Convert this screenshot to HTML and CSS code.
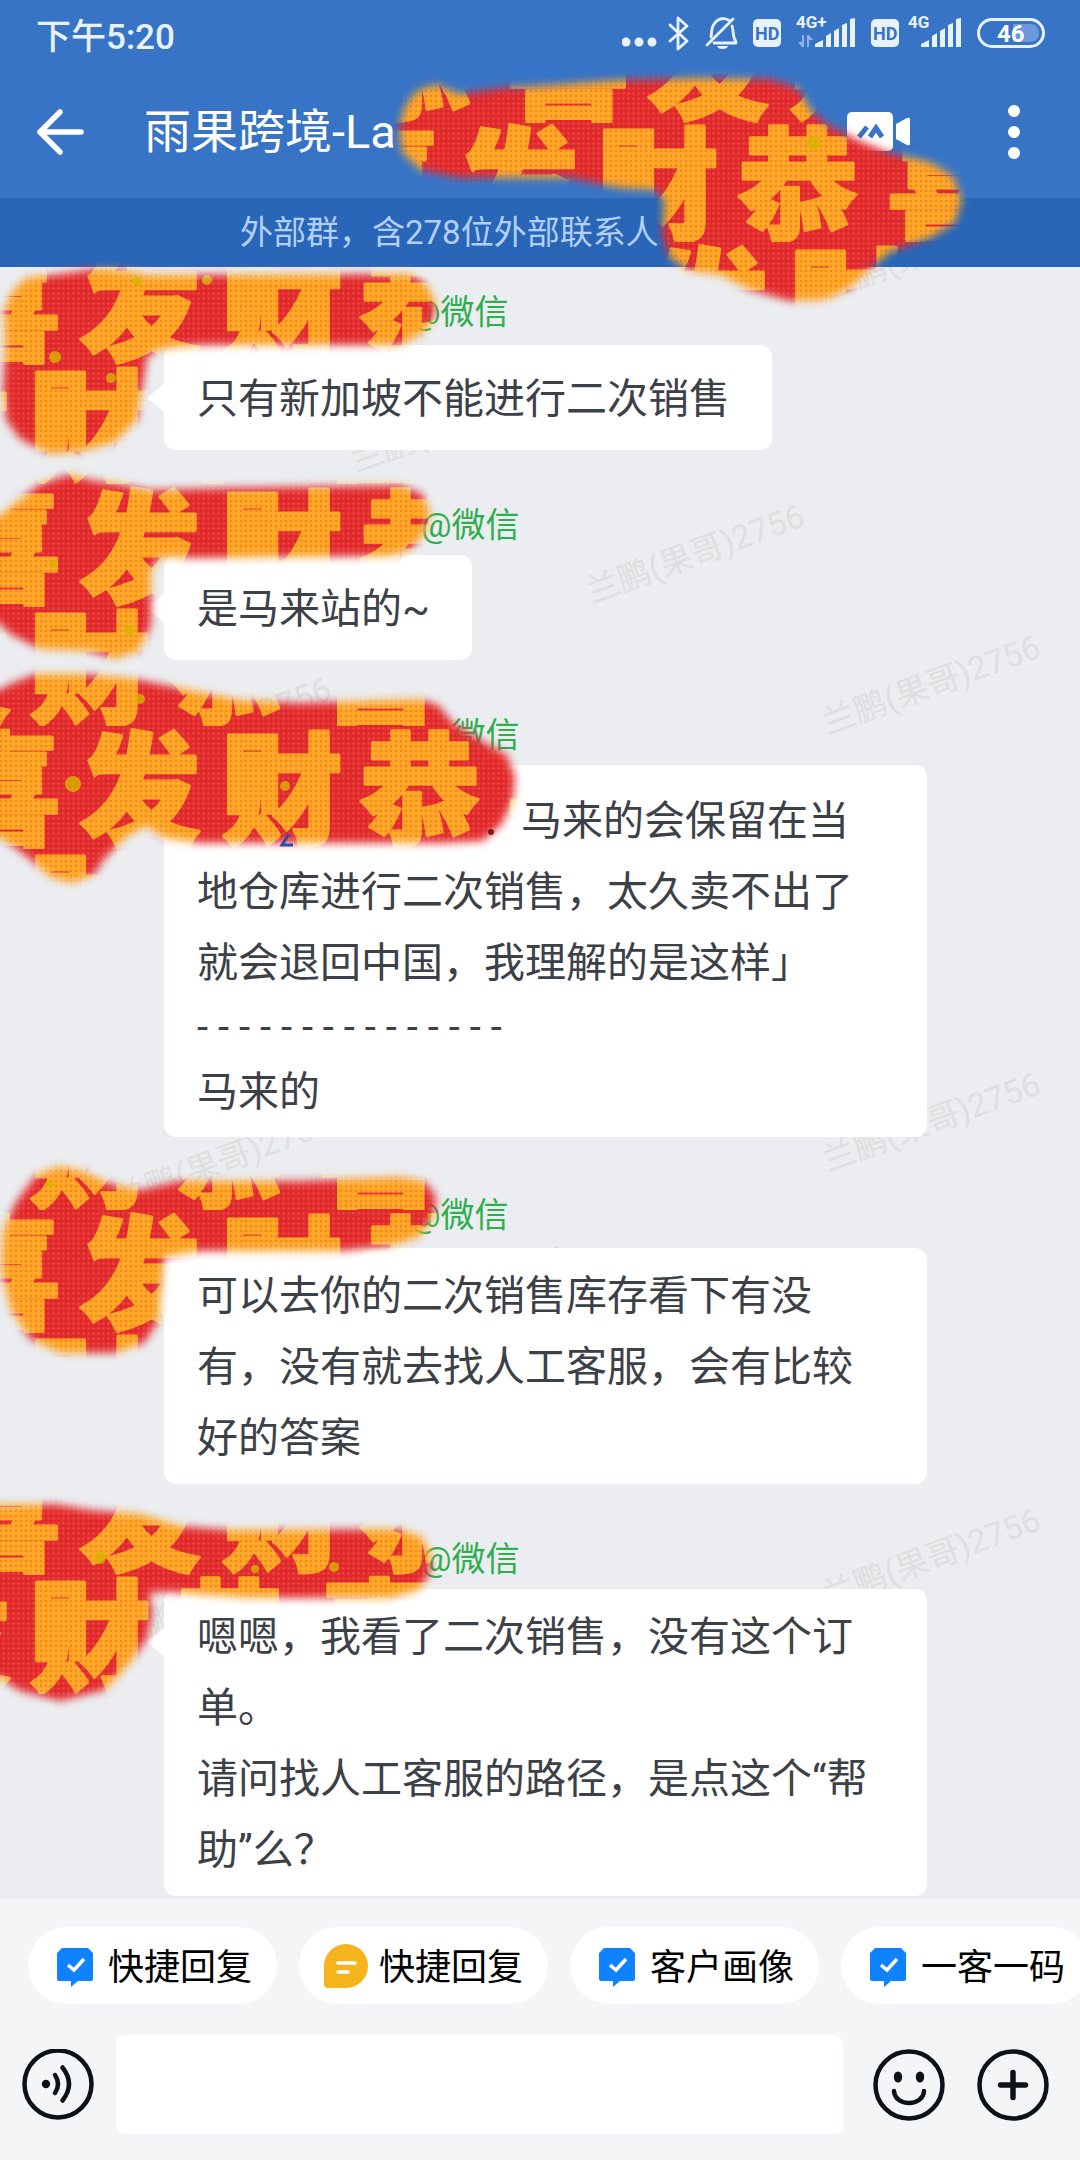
FILE: index.html
```html
<!DOCTYPE html>
<html lang="zh-CN">
<head>
<meta charset="utf-8">
<meta name="viewport" content="width=device-width, initial-scale=1">
<title>雨果跨境</title>
<link rel="stylesheet" href="styles.css">
</head>
<body>
<header class="top">
  <div class="status">
    <time class="clock">下午5:20</time>
    <svg class="status-icons" width="424" height="50" viewBox="622 8 424 50" aria-hidden="true">
      <g fill="#e8f2ff">
        <circle cx="626" cy="42" r="4.5"/><circle cx="639" cy="42" r="4.5"/><circle cx="652" cy="42" r="4.5"/>
        <rect x="753" y="19" width="28" height="28" rx="5"/>
        <rect x="871" y="19" width="28" height="28" rx="5"/>
        <path d="M815 47v-3l8-4v7zM826 47V36l5-3v14zM834 47V31l5-3v19zM842 47V25l5-2v24zM850 47V19l5-1v29z"/>
        <path d="M921 47v-3l8-4v7zM932 47V36l5-3v14zM940 47V31l5-3v19zM948 47V25l5-2v24zM956 47V19l5-1v29z"/>
        <path d="M717 46h11q-1 3-5.500 3t-5.500-3z"/>
      </g>
      <g fill="none" stroke="#e8f2ff" stroke-width="2.800" stroke-linejoin="round" stroke-linecap="round">
        <path d="M670 25l17 16-9 8V18l9 8-17 15"/>
        <path d="M711 37c1-5 0-9 3-13 4-6 11-7 16-3M732 26c2 5 0 10 4 16v1H714M707 45l26-26"/>
      </g>
      <g fill="#8fb2e8"><path d="M802 35h2v12h-2l-4-5h4zM807 47V35h2l4 5h-4v7z"/></g>
      <g fill="#3874c6" class="badge-text"><text x="755" y="40">HD</text><text x="873" y="40">HD</text></g>
      <g fill="#e8f2ff" class="net-text"><text x="796" y="28">4G+</text><text x="908" y="28">4G</text></g>
      <rect x="978.500" y="19.500" width="65" height="27" rx="13.500" fill="none" stroke="#e8f2ff" stroke-width="3"/>
      <path d="M1013 24h16q10 0 10 9t-10 9h-16z" fill="#6b99da"/>
      <text class="battery-text" x="997" y="42" fill="#fff">46</text>
    </svg>
  </div>
  <div class="bar">
    <button class="icon-button back" aria-label="返回">
      <svg width="48" height="48" viewBox="0 0 48 48"><path d="M24 4L4 24l20 20M4 24h41" fill="none" stroke="#fff" stroke-width="5.500" stroke-linecap="round" stroke-linejoin="round"/></svg>
    </button>
    <h1 class="title">雨果跨境-La</h1>
    <button class="icon-button video" aria-label="视频会议">
      <svg width="64" height="40" viewBox="0 0 64 40"><rect width="46" height="39" rx="5" fill="#fff"/><path d="M49 12L60 6q3-1 3 1v25q0 2-3 1L49 27z" fill="#fff"/><path d="M12 25l8-10M23 25l6-9 6 9" fill="none" stroke="#3874c6" stroke-width="5"/></svg>
    </button>
    <button class="icon-button more" aria-label="更多">
      <svg width="12" height="56" viewBox="0 0 12 56"><g fill="#fff"><circle cx="6" cy="7" r="6"/><circle cx="6" cy="28" r="6"/><circle cx="6" cy="49" r="6"/></g></svg>
    </button>
  </div>
  <p class="notice">外部群，含278位外部联系人</p>
</header>

<main class="chat">
  <ol class="messages">
    <li class="message short-name">
      <p class="source">@微信</p>
      <div class="bubble"><p>只有新加坡不能进行二次销售</p></div>
    </li>
    <li class="message">
      <p class="source">@微信</p>
      <div class="bubble"><p>是马来站的~</p></div>
    </li>
    <li class="message">
      <p class="source">@微信</p>
      <div class="bubble quoted">
        <p class="quote">马来的会保留在当地仓库进行二次销售，太久卖不出了就会退回中国，我理解的是这样」</p>
        <p class="rule">- - - - - - - - - - - - - - -</p>
        <p>马来的</p>
      </div>
    </li>
    <li class="message short-name">
      <p class="source">@微信</p>
      <div class="bubble"><p>可以去你的二次销售库存看下有没有，没有就去找人工客服，会有比较好的答案</p></div>
    </li>
    <li class="message">
      <p class="source">@微信</p>
      <div class="bubble"><p>嗯嗯，我看了二次销售，没有这个订单。<br>请问找人工客服的路径，是点这个“帮助”么？</p></div>
    </li>
  </ol>
  <svg class="watermarks" width="1080" height="1632" viewBox="0 267 1080 1632" aria-hidden="true">
    <g text-anchor="middle">
      <text transform="translate(931 249) rotate(-20)" y="12">兰鹏(果哥)2756</text>
      <text transform="translate(459 422) rotate(-20)" y="12">兰鹏(果哥)2756</text>
      <text transform="translate(695 553) rotate(-20)" y="12">兰鹏(果哥)2756</text>
      <text transform="translate(931 684) rotate(-20)" y="12">兰鹏(果哥)2756</text>
      <text transform="translate(222 726) rotate(-20)" y="12">兰鹏(果哥)2756</text>
      <text transform="translate(931 1121) rotate(-20)" y="12">兰鹏(果哥)2756</text>
      <text transform="translate(222 1160) rotate(-20)" y="12">兰鹏(果哥)2756</text>
      <text transform="translate(459 1294) rotate(-20)" y="12">兰鹏(果哥)2756</text>
      <text transform="translate(931 1557) rotate(-20)" y="12">兰鹏(果哥)2756</text>
      <text transform="translate(222 1597) rotate(-20)" y="12">兰鹏(果哥)2756</text>
    </g>
  </svg>
</main>

<footer class="composer">
  <div class="chips">
    <button class="chip"><svg width="44" height="44" viewBox="0 0 44 44"><path d="M9 4h26l5 5v26q0 2-2 2H25l-7 6v-6H6q-2 0-2-2V9z" fill="#0f82ff"/><path d="M15 21l6 5 10-11" fill="none" stroke="#fff" stroke-width="3.500"/></svg><span>快捷回复</span></button>
    <button class="chip"><svg width="44" height="44" viewBox="0 0 44 44"><path d="M22 0a22 22 0 0 1 0 44H4q-4 0-4-4V22A22 22 0 0 1 22 0z" fill="#f5b41c"/><path d="M14 19h17M14 28h10" stroke="#fff" stroke-width="3.500" stroke-linecap="round"/></svg><span>快捷回复</span></button>
    <button class="chip"><svg width="44" height="44" viewBox="0 0 44 44"><path d="M9 4h26l5 5v26q0 2-2 2H25l-7 6v-6H6q-2 0-2-2V9z" fill="#0f82ff"/><path d="M15 21l6 5 10-11" fill="none" stroke="#fff" stroke-width="3.500"/></svg><span>客户画像</span></button>
    <button class="chip"><svg width="44" height="44" viewBox="0 0 44 44"><path d="M9 4h26l5 5v26q0 2-2 2H25l-7 6v-6H6q-2 0-2-2V9z" fill="#0f82ff"/><path d="M15 21l6 5 10-11" fill="none" stroke="#fff" stroke-width="3.500"/></svg><span>一客一码</span></button>
  </div>
  <div class="entry">
    <button class="icon-button" aria-label="语音">
      <svg width="72" height="72" viewBox="0 0 72 72"><g fill="none" stroke="#0d1218" stroke-width="4.500" stroke-linecap="round"><circle cx="36" cy="35" r="33.500"/><path d="M33 26q6 9 0 18M40.500 18.500q13 16.500 0 33"/></g><circle cx="24" cy="35" r="4.200" fill="#0d1218"/></svg>
    </button>
    <input class="field" type="text" aria-label="消息">
    <button class="icon-button smile" aria-label="表情">
      <svg width="72" height="72" viewBox="0 0 72 72"><g fill="none" stroke="#0d1218" stroke-width="4.500" stroke-linecap="round"><circle cx="36" cy="36" r="33.500"/><path d="M21 42c1 16 29 16 30 0"/></g><g fill="#0d1218"><ellipse cx="25" cy="28" rx="4.200" ry="5.500"/><ellipse cx="47" cy="28" rx="4.200" ry="5.500"/></g></svg>
    </button>
    <button class="icon-button" aria-label="添加">
      <svg width="72" height="72" viewBox="0 0 72 72"><g fill="none" stroke="#0d1218" stroke-linecap="round"><circle cx="36" cy="36" r="33.500" stroke-width="4.500"/><path d="M36 23.500v25M23.500 36h25" stroke-width="5.500"/></g></svg>
    </button>
  </div>
</footer>

<svg class="stickers" width="1080" height="1750" viewBox="0 0 1080 1750" aria-hidden="true">
  <defs>
    <pattern id="fortune" width="568" height="242" patternUnits="userSpaceOnUse">
      <rect width="568" height="242" fill="#e32a2f"/>
      <g class="fortune-text" text-anchor="middle" fill="#ffa424" stroke="#ffa424" stroke-width="3" stroke-linejoin="round">
        <text x="0" y="109">喜</text><text x="140" y="109">发</text><text x="282" y="109">财</text><text x="420" y="109">恭</text><text x="568" y="109">喜</text>
        <text x="-50" y="230">发</text><text x="90" y="230">财</text><text x="230" y="230">恭</text><text x="380" y="230">喜</text><text x="518" y="230">发</text>
      </g>
    </pattern>
    <pattern id="weave" width="5" height="5" patternUnits="userSpaceOnUse">
      <rect width="2" height="2" fill="#c40f12" opacity=".2"/>
      <rect x="2.500" y="2.500" width="2" height="2" fill="#ffe06a" opacity=".2"/>
    </pattern>
    <filter id="soft" x="-5%" y="-5%" width="110%" height="110%"><feGaussianBlur stdDeviation="4"/></filter>
    <mask id="strokes" maskUnits="userSpaceOnUse" x="-20" y="0" width="1120" height="1750">
      <g fill="#fff" filter="url(#soft)">
        <path d="M399 128L404 108 415 92 435 84 460 94 500 88 540 86 620 80 700 78 770 79 798 88 812 112 830 126 860 141 890 153 930 162 953 176 962 200 955 223 930 238 890 252 870 269 850 288 825 300 790 301 750 290 720 275 690 271 670 258 662 235 664 200 655 190 620 188 570 178 520 178 460 178 420 170 402 152z"/>
        <path d="M25 278L60 274 95 269 120 270 150 275 410 274 427 285 436 303 432 321 420 335 400 345 200 345 160 349 147 357 142 390 137 420 115 442 80 452 50 454 20 439 6 420 3 390 5 350 4 310 11 293z"/>
        <path d="M70 474L90 480 120 484 150 490 220 488 400 485 422 494 430 511 424 534 410 550 390 556 200 558 160 557 151 570 151 625 139 651 115 659 90 651 40 649 10 634-15 610-15 527 10 507 40 484z"/>
        <path d="M35 674L80 674 130 678 180 688 240 700 300 703 420 699 438 705 454 724 480 740 506 754 515 776 513 800 502 824 483 841 440 843 200 843 165 838 145 826 124 839 104 859 94 875 72 883 50 877 30 859 10 844-15 830-15 697 10 684z"/>
        <path d="M60 1166L85 1172 110 1184 140 1190 180 1181 300 1181 400 1177 424 1181 436 1196 434 1215 419 1237 390 1246 340 1251 200 1251 164 1257 159 1320 144 1343 115 1353 60 1353 30 1339 11 1310 1 1270 3 1230 16 1202 36 1175z"/>
        <path d="M-15 1505L55 1504 90 1510 140 1514 180 1526 230 1530 400 1529 422 1537 431 1555 429 1575 419 1590 390 1598 250 1598 170 1592 150 1592 152 1615 147 1639 129 1664 105 1690 60 1701 20 1691-15 1669z"/>
      </g>
    </mask>
  </defs>
  <g mask="url(#strokes)">
    <rect width="1080" height="1750" fill="url(#fortune)"/>
    <rect width="1080" height="1750" fill="url(#weave)"/>
    <g fill="#d8b400" opacity=".8"><circle cx="814" cy="143" r="7"/><circle cx="137" cy="281" r="5"/><circle cx="207" cy="280" r="5"/><circle cx="55" cy="357" r="6"/><circle cx="111" cy="378" r="5"/><circle cx="54" cy="564" r="4"/><circle cx="129" cy="630" r="5"/><circle cx="73" cy="784" r="8"/><circle cx="285" cy="786" r="5"/><circle cx="140" cy="699" r="5"/><circle cx="50" cy="1184" r="4"/><circle cx="100" cy="1558" r="6"/><circle cx="334" cy="1567" r="5"/><circle cx="255" cy="1569" r="4"/></g>
  </g>
  <path d="M289 834l-7 11h11" fill="none" stroke="#2f4ba8" stroke-width="3"/>
  <circle cx="491" cy="832" r="3" fill="#7c1a1c"/>
</svg>
</body>
</html>
```

FILE: styles.css
```css
* {
  box-sizing: border-box;
}

body {
  position: relative;
  display: flex;
  flex-direction: column;
  min-height: 100vh;
  margin: 0;
  overflow-x: hidden;
  background: #ebedf0;
  color: #3c4047;
  font-family: Roboto, "Noto Sans CJK SC", sans-serif;
}

h1,
p,
ol {
  margin: 0;
  padding: 0;
  font-weight: 400;
}

svg {
  display: block;
  flex: none;
}

button {
  border: 0;
  padding: 0;
  background: none;
  color: inherit;
  font: inherit;
}

/* Header */

.top {
  background: #3874c6;
  color: #fff;
}

.status {
  display: flex;
  align-items: center;
  justify-content: space-between;
  height: 66px;
  padding: 0 34px 0 36px;
}

.clock {
  color: #e8f2ff;
  font-size: 35px;
  font-weight: 500;
}

.badge-text {
  font-size: 18px;
  font-weight: 700;
}

.net-text {
  font-size: 17px;
  font-weight: 700;
}

.battery-text {
  font-size: 24px;
  font-weight: 700;
}

.bar {
  display: flex;
  align-items: center;
  height: 132px;
  padding: 0 60px 0 36px;
}

.title {
  flex: 1;
  margin-left: 60px;
  font-size: 47px;
  line-height: 64px;
}

.more {
  margin-left: 97px;
}

.notice {
  padding: 1px 240px 0;
  background: #2966b8;
  color: #b3d0fa;
  font-size: 33px;
  line-height: 68px;
  white-space: nowrap;
}

/* Conversation */

.chat {
  position: relative;
  flex: 1;
  overflow: hidden;
  padding: 22px 0 3px;
}

.watermarks {
  position: absolute;
  top: 0;
  left: 0;
  font-size: 33px;
  fill: #dddfe1;
}

.messages {
  position: relative;
  z-index: 1;
  display: flex;
  flex-direction: column;
  gap: 55px;
  list-style: none;
}

.message {
  display: flex;
  flex-direction: column;
  align-items: flex-start;
  gap: 10px;
  padding: 0 153px 0 164px;
}

.source {
  margin-left: 257px;
  color: #2fae50;
  font-size: 34px;
  line-height: 40px;
}

.short-name {
  gap: 13px;
  padding-top: 3px;
}

.short-name .source {
  margin-left: 246px;
}

.bubble {
  position: relative;
  display: flex;
  flex-direction: column;
  justify-content: center;
  min-height: 105px;
  padding: 13px 42px 10px 33px;
  border-radius: 12px;
  background: #fff;
  font-size: 41px;
  line-height: 71px;
}

.bubble::before {
  content: "";
  position: absolute;
  top: 38px;
  left: -17px;
  width: 18px;
  height: 30px;
  background: #fff;
  clip-path: polygon(0 50%, 100% 0, 100% 100%);
}

.quoted {
  padding-top: 21px;
  padding-bottom: 9px;
}

.quote {
  text-indent: 324px;
}

.rule {
  font-size: 40px;
  line-height: 58px;
}

/* Composer */

.composer {
  display: flex;
  flex-direction: column;
  gap: 31px;
  padding: 28px 0 26px;
  background: #f4f5f7;
}

.chips {
  display: flex;
  gap: 22px;
  overflow: hidden;
  padding-left: 28px;
}

.chip {
  display: flex;
  flex: none;
  align-items: center;
  gap: 11px;
  height: 77px;
  padding: 0 25px;
  border-radius: 39px;
  background: #fff;
  color: #000;
  font-size: 36px;
}

.chip span {
  padding-bottom: 4px;
}

.entry {
  display: flex;
  align-items: center;
  padding: 0 31px 0 22px;
}

.field {
  flex: 1;
  min-width: 0;
  height: 99px;
  margin: 0 30px 0 22px;
  padding: 0 24px;
  border: 0;
  border-radius: 9px;
  background: #fff;
  font: inherit;
  font-size: 41px;
}

.smile {
  margin-right: 32px;
}

/* Sticker brush strokes over names and avatars */

.stickers {
  position: absolute;
  top: 0;
  left: 0;
  z-index: 2;
  pointer-events: none;
}

.fortune-text {
  font-family: "Noto Sans CJK SC", sans-serif;
  font-size: 122px;
  font-weight: 900;
}
```
